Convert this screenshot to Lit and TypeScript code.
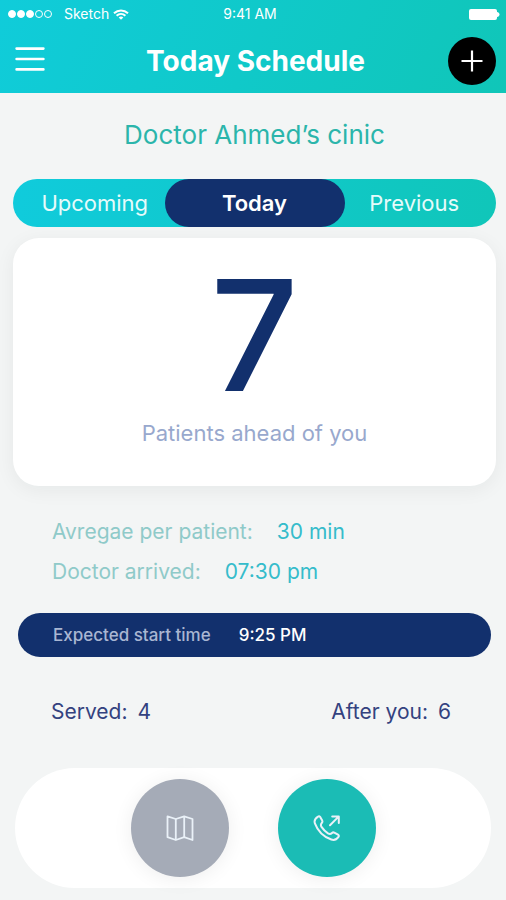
import { LitElement, html, css, svg } from "lit";
import { customElement, state } from "lit/decorators.js";

type Tab = "Upcoming" | "Today" | "Previous";

const TABS: Tab[] = ["Upcoming", "Today", "Previous"];

const wifiIcon = svg`
  <svg width="16" height="11" viewBox="0 0 16 11" fill="none" stroke="currentColor" stroke-width="2">
    <path d="M1 4.3C5 .5 11 .5 15 4.3" />
    <path d="M3.6 6.8C6.2 4.4 9.8 4.4 12.4 6.8" />
    <path d="M8 10.8L5.7 8.4C7 7.3 9 7.3 10.3 8.4Z" fill="currentColor" stroke="none" />
  </svg>`;

const batteryIcon = svg`
  <svg width="31" height="11" viewBox="0 0 31 11" fill="currentColor">
    <rect width="28" height="11" rx="2" />
    <path d="M28 3C31.4 3.6 31.4 7.4 28 8Z" />
  </svg>`;

const menuIcon = svg`
  <svg width="30" height="24" viewBox="0 0 30 24" stroke="currentColor" stroke-width="2.6" stroke-linecap="round">
    <path d="M1.6 1.6H28.4M1.6 12H28.4M1.6 22.4H28.4" />
  </svg>`;

const plusIcon = svg`
  <svg width="22" height="22" viewBox="0 0 22 22" stroke="currentColor" stroke-width="2.2">
    <path d="M11 .5V21.5M.5 11H21.5" />
  </svg>`;

const mapIcon = svg`
  <svg width="28" height="28" viewBox="0 0 28 28" fill="none" stroke="currentColor" stroke-linejoin="round">
    <path stroke-width="1.8" d="M1.5 2.4L9.8 5L18.2 2.4L26.5 5V26L18.2 23.2L9.8 26L1.5 23.2Z" />
    <path stroke-width="1.8" d="M9.8 5V26M18.2 2.4V23.2" />
  </svg>`;

const callIcon = svg`
  <svg width="28" height="28" viewBox="0 0 28 28" fill="none" stroke="currentColor" stroke-width="2" stroke-linecap="round" stroke-linejoin="round">
    <path d="M5 2.6C5.8 2 6.7 2.2 7.2 3L9.2 6.6C9.6 7.4 9.5 8.1 8.9 8.8C7.6 10.2 7.5 11.3 8.5 12.9C10.2 15.5 12.3 17.6 15 19.4C16.6 20.4 17.7 20.3 19 19C19.7 18.3 20.5 18.2 21.3 18.6L25 20.7C25.9 21.2 26.1 22 25.5 22.8C23.7 25.3 21.1 26.5 18.3 25.5C10.6 22.7 4.6 16.6 1.9 9.3C1 6.8 2.5 4.2 5 2.6Z" />
    <path d="M17 11.2L25.6 2.6M19.2 2.4H25.8V9" />
  </svg>`;

@customElement("app-root")
export class AppRoot extends LitElement {
  @state() private tab: Tab = "Today";

  static styles = css`
    :host {
      display: flex;
      flex-direction: column;
      box-sizing: border-box;
      min-height: 100vh;
      padding-bottom: 12px;
      background: #f3f5f5;
      color: #12306d;
      font-family: Inter, "Liberation Sans", sans-serif;
    }
    * {
      box-sizing: border-box;
    }
    button {
      margin: 0;
      padding: 0;
      border: 0;
      background: none;
      color: inherit;
      font: inherit;
      cursor: pointer;
    }
    svg {
      display: block;
    }
    h1,
    h2,
    p,
    dl,
    dd {
      margin: 0;
    }
    .header {
      color: #fff;
      background: linear-gradient(115deg, #10ccda, #10c6b8);
      padding-bottom: 8px;
    }
    .status {
      display: grid;
      grid-template-columns: 1fr auto 1fr;
      align-items: center;
      height: 28px;
      padding: 0 6px 0 8px;
      font-size: 14px;
      line-height: 20px;
    }
    .carrier {
      display: flex;
      align-items: center;
      gap: 4px;
    }
    .signal {
      display: flex;
      gap: 1px;
      margin-right: 8px;
    }
    .dot {
      width: 8px;
      height: 8px;
      border: 1px solid #fff;
      border-radius: 50%;
    }
    .dot.on {
      background: #fff;
    }
    .clock {
      padding-right: 8px;
    }
    .battery {
      justify-self: end;
    }
    .bar {
      display: grid;
      grid-template-columns: 48px 1fr 48px;
      align-items: center;
      padding: 9px 10px 0 15px;
    }
    .title {
      text-align: center;
      font-size: 28px;
      line-height: 40px;
      font-weight: 700;
    }
    .menu {
      justify-self: start;
      padding-bottom: 4px;
    }
    .add {
      display: grid;
      place-items: center;
      width: 48px;
      height: 48px;
      border-radius: 50%;
      background: #000;
    }
    .main {
      display: flex;
      flex-direction: column;
      padding: 0 10px 0 13px;
    }
    .clinic {
      padding: 25px 0 27px;
      text-align: center;
      color: #2bb5ab;
      font-size: 26px;
      line-height: 34px;
      font-weight: 400;
    }
    .tabs {
      display: grid;
      grid-template-columns: 1fr 156px 1fr;
      height: 48px;
      border-radius: 24px;
      background: linear-gradient(100deg, #10cbdc, #10c6b9);
      color: #e6fbfb;
      font-size: 22px;
      line-height: 28px;
    }
    .tab.on {
      margin: 0 -12px;
      border-radius: 24px;
      background: #12306d;
      color: #fff;
      font-weight: 600;
    }
    .card {
      display: flex;
      flex-direction: column;
      align-items: center;
      margin-top: 11px;
      padding: 35px 0 38px;
      border-radius: 26px;
      background: #fff;
      box-shadow: 0 4px 20px rgba(0, 40, 40, 0.06);
    }
    .count {
      font-size: 154px;
      line-height: 124px;
      font-weight: 500;
    }
    .ahead {
      padding-top: 21px;
      color: #98a8cd;
      font-size: 22px;
      line-height: 30px;
    }
    .facts {
      display: flex;
      flex-direction: column;
      gap: 12px;
      padding: 32px 39px 0;
      color: #8fcac9;
      font-size: 21px;
      line-height: 28px;
    }
    .fact {
      display: flex;
      gap: 24px;
    }
    .value {
      color: #35bccb;
    }
    .expected {
      display: flex;
      align-items: center;
      gap: 28px;
      height: 44px;
      margin: 27px 5px 0;
      padding: 0 35px;
      border-radius: 22px;
      background: #12306d;
      color: #a9b6d2;
      font-size: 17px;
      line-height: 24px;
      font-weight: 500;
    }
    .expected .value {
      color: #fff;
    }
    .totals {
      display: flex;
      justify-content: space-between;
      padding: 40px 45px 0 38px;
      color: #33427f;
      font-size: 21px;
      line-height: 30px;
    }
    .total {
      display: flex;
      gap: 10px;
    }
    .actions {
      display: flex;
      justify-content: center;
      gap: 49px;
      margin: 41px 5px 0 2px;
      padding: 11px 0;
      border-radius: 60px;
      background: #fff;
    }
    .action {
      display: grid;
      place-items: center;
      width: 98px;
      height: 98px;
      border-radius: 50%;
      color: #eaf1f8;
      background: #a5abb7;
      box-shadow: 0 2px 20px rgba(0, 0, 0, 0.07);
    }
    .action.call {
      background: #1bbcb5;
    }
  `;

  render() {
    return html`
      <header class="header">
        <div class="status">
          <div class="carrier">
            <span class="signal">
              ${[1, 1, 1, 0, 0].map((on) => html`<i class="dot ${on ? "on" : ""}"></i>`)}
            </span>
            <span>Sketch</span>
            ${wifiIcon}
          </div>
          <span class="clock">9:41 AM</span>
          <span class="battery">${batteryIcon}</span>
        </div>
        <div class="bar">
          <button class="menu" aria-label="Menu">${menuIcon}</button>
          <h1 class="title">Today Schedule</h1>
          <button class="add" aria-label="Add">${plusIcon}</button>
        </div>
      </header>
      <main class="main">
        <h2 class="clinic">Doctor Ahmed’s cinic</h2>
        <div class="tabs" role="tablist">
          ${TABS.map(
            (name) => html`<button
              class="tab ${name === this.tab ? "on" : ""}"
              role="tab"
              aria-selected=${name === this.tab ? "true" : "false"}
              @click=${() => (this.tab = name)}
            >${name}</button>`
          )}
        </div>
        <section class="card">
          <p class="count">7</p>
          <p class="ahead">Patients ahead of you</p>
        </section>
        <dl class="facts">
          <div class="fact"><dt>Avregae per patient:</dt><dd class="value">30 min</dd></div>
          <div class="fact"><dt>Doctor arrived:</dt><dd class="value">07:30 pm</dd></div>
        </dl>
        <div class="expected">
          <span>Expected start time</span>
          <span class="value">9:25 PM</span>
        </div>
        <dl class="totals">
          <div class="total"><dt>Served:</dt><dd>4</dd></div>
          <div class="total"><dt>After you:</dt><dd>6</dd></div>
        </dl>
        <nav class="actions">
          <button class="action" aria-label="Map">${mapIcon}</button>
          <button class="action call" aria-label="Call">${callIcon}</button>
        </nav>
      </main>
    `;
  }
}
